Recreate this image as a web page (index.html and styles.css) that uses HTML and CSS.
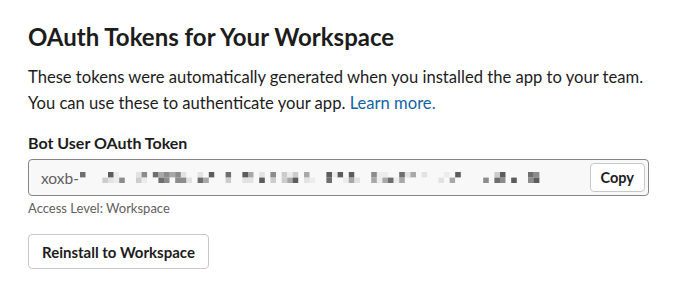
FILE: index.html
```html
<!DOCTYPE html>
<html lang="en">
<head>
    <meta charset="UTF-8">
    <title>OAuth Tokens for Your Workspace</title>
    <link rel="stylesheet" href="styles.css">
</head>
<body>
    <div class="section">
        <h2 class="title">OAuth Tokens for Your Workspace</h2>
        <p class="intro">
            These tokens were automatically generated when you installed the app to your team.<br>
            You can use these to authenticate your app. <a href="#" class="link">Learn more.</a>
        </p>

        <div class="token-block">
            <label class="token-label">Bot User OAuth Token</label>
            <div class="token-field">
                <span class="token-prefix">xoxb-</span>
                <svg class="token-blur" id="tokenBlur" width="470" height="11"></svg>
                <button class="copy-button">Copy</button>
            </div>
            <div class="token-hint">Access Level: Workspace</div>
        </div>

        <button class="reinstall-button">Reinstall to Workspace</button>
    </div>

    <script>
        // Pixelated (redacted) token: two rows of grey blocks
        const blur = document.getElementById('tokenBlur');
        const shades = ['#f8f8f8', '#f8f8f8', '#f8f8f8', '#f8f8f8', '#ececec', '#e2e2e2', '#cccccc', '#a8a8a8', '#8c8c8c', '#6e6e6e', '#5c5c5c'];
        let seed = 11;
        function rand() {
            seed = (seed * 9301 + 49297) % 233280;
            return seed / 233280;
        }
        const cols = 82;
        const size = 5.6;
        let svg = '';
        for (let c = 0; c < cols; c++) {
            // words have gaps between them
            const gap = rand() < 0.25;
            for (let r = 0; r < 2; r++) {
                const shade = gap ? shades[0] : shades[Math.floor(rand() * shades.length)];
                svg += `<rect x="${(c * size).toFixed(1)}" y="${r * size}" width="${size + 0.2}" height="${size}" fill="${shade}"/>`;
            }
        }
        blur.innerHTML = svg;
    </script>
</body>
</html>
```

FILE: styles.css
```css
* {
    margin: 0;
    padding: 0;
    box-sizing: border-box;
}

body {
    font-family: Lato, "Noto Sans", sans-serif;
    background: #ffffff;
    color: #1d1c1d;
}

.section {
    padding: 22px 25px 0 28px;
}

.title {
    font-size: 24px;
    font-weight: 700;
    line-height: 30px;
    margin-bottom: 12px;
}

.intro {
    font-size: 16.6px;
    line-height: 26px;
    margin-bottom: 16px;
}

.link {
    color: #1264a3;
    text-decoration: none;
}

.token-label {
    display: block;
    font-size: 16px;
    font-weight: 700;
    line-height: 22px;
    margin-bottom: 5px;
}

.token-field {
    display: flex;
    align-items: center;
    height: 37px;
    padding: 0 3px 0 12px;
    background: #f8f8f8;
    border: 1px solid #868686;
    border-radius: 4px;
    color: #616061;
    font-size: 15.5px;
}

.token-prefix {
    margin-right: 1px;
}

.token-blur {
    flex: none;
}

.copy-button {
    margin-left: auto;
    height: 29px;
    padding: 0 10px;
    background: #ffffff;
    border: 1px solid #c8c8c8;
    border-radius: 4px;
    font-family: inherit;
    font-size: 14.5px;
    font-weight: 700;
    color: #1d1c1d;
}

.token-hint {
    font-size: 13px;
    line-height: 18px;
    margin-top: 3px;
    color: #616061;
}

.reinstall-button {
    margin-top: 17px;
    height: 35px;
    padding: 0 13px;
    background: #ffffff;
    border: 1px solid #c8c8c8;
    border-radius: 4px;
    font-family: inherit;
    font-size: 15px;
    font-weight: 700;
    color: #1d1c1d;
}
```
